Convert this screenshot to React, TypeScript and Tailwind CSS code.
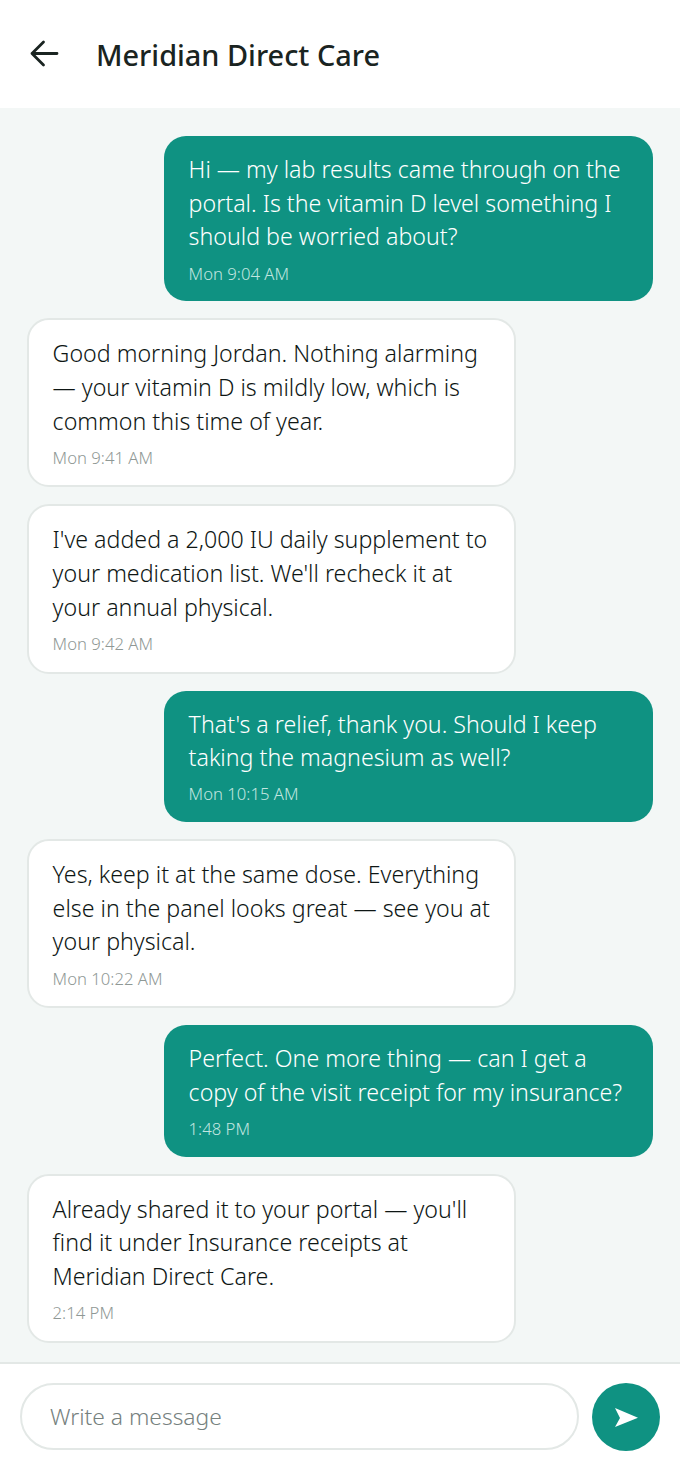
import React from "react";

type Msg = { me: boolean; lines: string[]; time: string };

const msgs: Msg[] = [
  { me: true, lines: ["Hi — my lab results came through on the", "portal. Is the vitamin D level something I", "should be worried about?"], time: "Mon 9:04 AM" },
  { me: false, lines: ["Good morning Jordan. Nothing alarming", "— your vitamin D is mildly low, which is", "common this time of year."], time: "Mon 9:41 AM" },
  { me: false, lines: ["I've added a 2,000 IU daily supplement to", "your medication list. We'll recheck it at", "your annual physical."], time: "Mon 9:42 AM" },
  { me: true, lines: ["That's a relief, thank you. Should I keep", "taking the magnesium as well?"], time: "Mon 10:15 AM" },
  { me: false, lines: ["Yes, keep it at the same dose. Everything", "else in the panel looks great — see you at", "your physical."], time: "Mon 10:22 AM" },
  { me: true, lines: ["Perfect. One more thing — can I get a", "copy of the visit receipt for my insurance?"], time: "1:48 PM" },
  { me: false, lines: ["Already shared it to your portal — you'll", "find it under Insurance receipts at", "Meridian Direct Care."], time: "2:14 PM" },
];

function Bubble({ m }: { m: Msg }) {
  return (
    <div
      className={
        m.me
          ? "self-end w-[489px] rounded-[22px] bg-[#0f9282] px-[24.6px] pt-[17px] pb-[15.7px] text-white"
          : "self-start w-[488.5px] rounded-[22px] border-2 border-[#e3e8e6] bg-white px-[23.6px] pt-[17px] pb-[15.7px] text-[#0e1614]"
      }
    >
      <p className="text-[23.2px] font-light leading-[33.7px]">
        {m.lines.map((l) => (
          <span key={l} className="block whitespace-nowrap">{l}</span>
        ))}
      </p>
      <p className={m.me ? "mt-[7.4px] text-[16.7px] font-light leading-[24px] text-[#c2e6e0]" : "mt-[7.4px] text-[16.7px] font-light leading-[24px] text-[#8f9895]"}>
        {m.time}
      </p>
    </div>
  );
}

export default function App() {
  return (
    <div className="flex h-[1478px] w-[680px] flex-col bg-white font-['Noto_Sans',sans-serif]">
      <header className="flex h-[108px] items-center gap-[36px] pl-[30px]">
        <svg width="30" height="28" viewBox="0 0 30 28" fill="none" stroke="#1a2421" strokeWidth="2.8" strokeLinecap="round" strokeLinejoin="round">
          <path d="M2 13.5H27M13.5 2 2 13.5 13.5 25" />
        </svg>
        <h1 className="mt-[1px] text-[28.9px] font-medium leading-[40px] text-[#1a2421]">Meridian Direct Care</h1>
      </header>
      <main className="flex flex-1 flex-col gap-[17px] bg-[#f3f7f6] pl-[27px] pr-[27px] pt-[28px]">
        {msgs.map((m) => (
          <Bubble key={m.time} m={m} />
        ))}
      </main>
      <footer className="flex h-[116px] items-start gap-[13px] border-t-2 border-[#e3e8e6] pl-[20px] pt-[19px]">
        <div className="flex h-[67px] w-[559px] items-center rounded-full border-2 border-[#e3e8e6] pl-[28px] pt-[2px] text-[22.8px] font-light text-[#76817e]">
          Write a message
        </div>
        <div className="flex h-[68px] w-[68px] items-center justify-center rounded-full bg-[#0f9282]">
          <svg width="23" height="19" viewBox="0 0 23 19">
            <path d="M0 0 23 9.8 0 19 5 10Z" fill="#fff" />
          </svg>
        </div>
      </footer>
    </div>
  );
}
